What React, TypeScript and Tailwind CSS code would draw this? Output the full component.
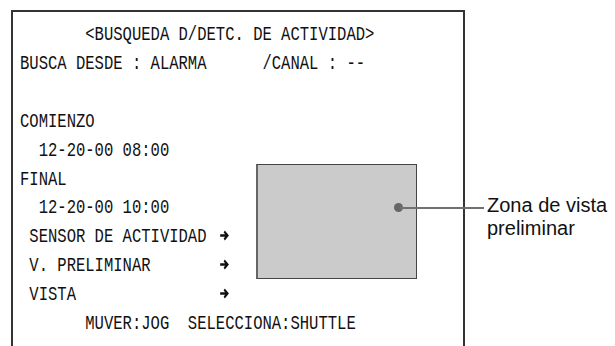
import React from 'react';

type OsdLine = { text: string; arrow?: boolean };

const osdLines: OsdLine[] = [
  { text: '       <BUSQUEDA D/DETC. DE ACTIVIDAD>' },
  { text: 'BUSCA DESDE : ALARMA      /CANAL : --' },
  { text: ' ' },
  { text: 'COMIENZO' },
  { text: '  12-20-00 08:00' },
  { text: 'FINAL' },
  { text: '  12-20-00 10:00' },
  { text: ' SENSOR DE ACTIVIDAD ', arrow: true },
  { text: ' V. PRELIMINAR       ', arrow: true },
  { text: ' VISTA               ', arrow: true },
  { text: '       MUVER:JOG  SELECCIONA:SHUTTLE' },
];

const Arrow = () => (
  <svg width="13" height="11" viewBox="0 0 13 11" className="inline-block ml-[5px] -mt-[3px] align-middle">
    <path d="M0.5 5.5H10.5M6 1.5L10.5 5.5L6 9.5" fill="none" stroke="#111" strokeWidth="2.4" />
  </svg>
);

export default function App() {
  return (
    <div className="relative w-[615px] h-[346px] bg-white overflow-hidden">
      {/* OSD screen frame */}
      <div className="ml-[11px] mt-[10px] w-[454px] h-[350px] border-2 border-b-0 border-[#333] pl-[7px] pt-[9px]">
        <div
          className="origin-left scale-x-[0.74] whitespace-pre text-[21px] leading-[28.9px] text-[#111]"
          style={{ fontFamily: '"Liberation Mono", "DejaVu Sans Mono", monospace' }}
        >
          {osdLines.map((line, i) => (
            <div key={i}>
              {line.text}
              {line.arrow && <Arrow />}
            </div>
          ))}
        </div>
      </div>

      {/* Preview area */}
      <div className="absolute left-[256px] top-[164px] w-[161px] h-[115px] bg-[#cbcbcb] border border-[#444] border-l-2 border-l-[#666]" />

      {/* Callout: dot, leader line, label */}
      <div className="absolute left-[394px] top-[194px] flex items-start">
        <div className="mt-[9px] w-[9px] h-[9px] rounded-full bg-[#666] shrink-0" />
        <div className="mt-[13px] w-[84px] h-[2px] -ml-[3px] bg-[#707070] shrink-0" />
        <div
          className="ml-[3px] text-[20px] leading-[23px] text-[#111]"
          style={{ fontFamily: '"Liberation Sans", Arial, sans-serif' }}
        >
          <div>Zona de vista</div>
          <div>preliminar</div>
        </div>
      </div>
    </div>
  );
}
